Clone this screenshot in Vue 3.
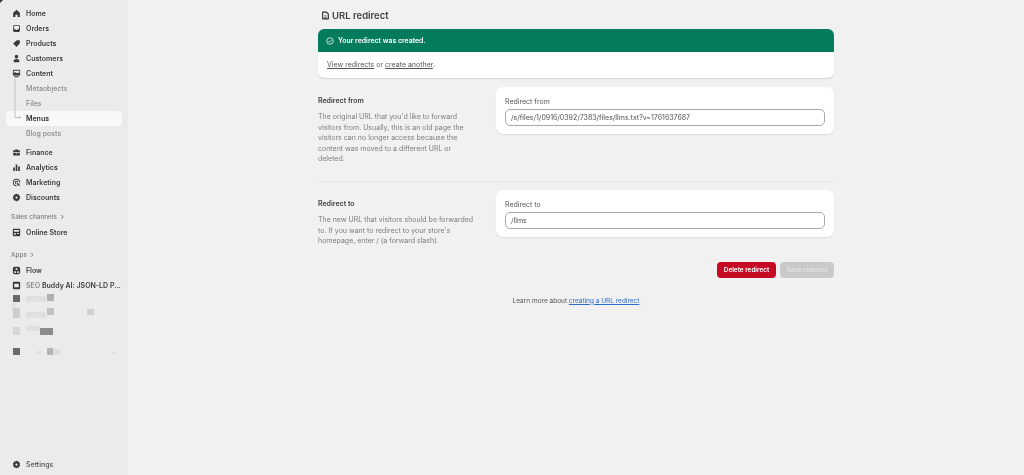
<script setup>
const group1 = [
  { label: 'Home', icon: 'home' }, { label: 'Orders', icon: 'orders' }, { label: 'Products', icon: 'tag' },
  { label: 'Customers', icon: 'person' }, { label: 'Content', icon: 'content' }
]
const subs = [
  { label: 'Metaobjects' }, { label: 'Files' }, { label: 'Menus', active: true }, { label: 'Blog posts' }
]
const group2 = [
  { label: 'Finance', icon: 'finance' }, { label: 'Analytics', icon: 'bars' },
  { label: 'Marketing', icon: 'target' }, { label: 'Discounts', icon: 'gear' }
]
const blocks = [
  [26, 296, 20, 6, '#e0e0e0'], [12, 303, 4, 8, '#e2e2e2'],
  [13, 295, 7, 7, '#6a6a6a'], [47, 294, 7, 7, '#b0b0b0'],
  [26, 312, 20, 6, '#e0e0e0'], [13, 308, 7, 10, '#cfcfcf'], [47, 308, 7, 7, '#c2c2c2'], [87, 309, 7, 6, '#d0d0d0'],
  [26, 326, 14, 5, '#e0e0e0'], [13, 327, 7, 8, '#d6d6d6'], [40, 328, 13, 7, '#8c8c8c'],
  [13, 348, 7, 7, '#6a6a6a'], [47, 348, 6, 7, '#b5b5b5'], [53, 349, 7, 6, '#dedede'], [37, 351, 4, 3, '#dedede'], [112, 352, 3, 2, '#dedede']
]
</script>

<template>
  <div class="page">
    <aside class="sidebar">
      <nav class="nav">
        <div class="group">
          <a v-for="item in group1" :key="item.label" class="row">
            <svg class="ico" viewBox="0 0 16 16">
              <path v-if="item.icon === 'home'" d="M8 1.5 2 6.5V14h4v-4h4v4h4V6.5z" />
              <path v-else-if="item.icon === 'orders'" fill-rule="evenodd" d="M4 2h8a2 2 0 0 1 2 2v8a2 2 0 0 1-2 2H4a2 2 0 0 1-2-2V4a2 2 0 0 1 2-2m-.5 7h2.200l1 1.500h2.600l1-1.500h2.200V4.200a.7.7 0 0 0-.7-.7H4.200a.7.7 0 0 0-.7.7z" />
              <path v-else-if="item.icon === 'tag'" d="M8.500 2H13a1 1 0 0 1 1 1v4.500L8 14 2 8z" />
              <path v-else-if="item.icon === 'person'" d="M8 1.500a3.200 3.200 0 1 1 0 6.400 3.200 3.200 0 0 1 0-6.400M3 14.500v-2.300C3 10.400 5 9 8 9s5 1.400 5 3.200v2.300z" />
              <path v-else-if="item.icon === 'content'" fill-rule="evenodd" d="M3 1.500h10A1.500 1.500 0 0 1 14.500 3v7a1.500 1.500 0 0 1-1.500 1.500H3A1.500 1.500 0 0 1 1.500 10V3A1.500 1.500 0 0 1 3 1.500M3 3v4.500l2.500-2 2.500 2 2-1.500 3 2V3zM4 13h8v1.500H4z" />
            </svg>
            <span>{{ item.label }}</span>
          </a>
          <div class="rail">
            <svg class="rail-line" viewBox="0 0 8 40" width="8" height="40">
              <path d="M1 0V38.500H6.500M5 37 6.500 38.500 5 40" fill="none" stroke="#c4c4c4" stroke-width="1" />
            </svg>
            <a v-for="sub in subs" :key="sub.label" class="row sub" :class="{ active: sub.active }">
              <span>{{ sub.label }}</span>
            </a>
          </div>
        </div>

        <div class="group second">
          <a v-for="item in group2" :key="item.label" class="row">
            <svg class="ico" viewBox="0 0 16 16">
              <path v-if="item.icon === 'finance'" fill-rule="evenodd" d="M5.500 4V2.500h5V4H14v3.500H2V4zM7 4h2v-.2H7zM2 9h5v1h2V9h5v4.500H2z" />
              <path v-else-if="item.icon === 'bars'" d="M2 8h3v6H2zM6.500 2.500h3V14h-3zM11 6h3v8h-3z" />
              <path v-else-if="item.icon === 'target'" fill-rule="evenodd" d="M8 1.500a6.500 6.500 0 0 1 6.500 6.500h-1.600A4.900 4.900 0 1 0 8 12.900v1.600A6.500 6.500 0 0 1 8 1.500m0 3.300A3.200 3.200 0 0 1 11.200 8H9.500A1.500 1.500 0 1 0 8 9.500v1.700a3.200 3.200 0 0 1 0-6.400M9 9l5.500 1.500-2 1.200 1.800 1.800-.9.900-1.800-1.800-1.200 2z" />
              <path v-else-if="item.icon === 'gear'" fill-rule="evenodd" d="M8 1l1.700 1.500 2.300-.2.500 2.200 2 1.200-1 2.300 1 2.300-2 1.200-.5 2.200-2.300-.2L8 15l-1.700-1.500-2.300.2-.5-2.200-2-1.200 1-2.300-1-2.300 2-1.200.5-2.200 2.300.2zm0 5a2 2 0 1 0 0 4 2 2 0 0 0 0-4" />
            </svg>
            <span>{{ item.label }}</span>
          </a>
        </div>

        <div class="heading sales">Sales channels <span class="chev">›</span></div>
        <a class="row">
          <svg class="ico" viewBox="0 0 16 16">
            <path fill-rule="evenodd" d="M3 1.500h10A1.500 1.500 0 0 1 14.500 3v10a1.500 1.500 0 0 1-1.500 1.500H3A1.500 1.500 0 0 1 1.500 13V3A1.500 1.500 0 0 1 3 1.500M3.500 3.500v3.200h9V3.500zM4 9v3.500h2.500V9zm5 0v1.500h3V9z" />
          </svg>
          <span>Online Store</span>
        </a>

        <div class="heading apps">Apps <span class="chev">›</span></div>
        <a class="row">
          <svg class="ico" viewBox="0 0 16 16">
            <path fill-rule="evenodd" d="M5 1.500h6A3.500 3.500 0 0 1 14.500 5v6a3.500 3.500 0 0 1-3.500 3.500H5A3.500 3.500 0 0 1 1.500 11V5A3.500 3.500 0 0 1 5 1.500M6.500 4v3h3V4zM4 9.500v3h3v-3zm5 0v3h3v-3z" />
          </svg>
          <span>Flow</span>
        </a>
        <a class="row">
          <svg class="ico" viewBox="0 0 16 16">
            <path fill-rule="evenodd" d="M3 1.500h10A1.500 1.500 0 0 1 14.500 3v10a1.500 1.500 0 0 1-1.500 1.500H3A1.500 1.500 0 0 1 1.500 13V3A1.500 1.500 0 0 1 3 1.500M4 5v6h8V5z" />
          </svg>
          <span class="clip"><span class="faded">SEO</span> Buddy AI: JSON-LD P...</span>
        </a>
      </nav>

      <a class="row settings">
        <svg class="ico" viewBox="0 0 16 16">
          <path fill-rule="evenodd" d="M8 1l1.700 1.500 2.300-.2.500 2.200 2 1.200-1 2.300 1 2.300-2 1.200-.5 2.200-2.300-.2L8 15l-1.700-1.500-2.300.2-.5-2.200-2-1.200 1-2.300-1-2.300 2-1.200.5-2.200 2.300.2zm0 5a2 2 0 1 0 0 4 2 2 0 0 0 0-4" />
        </svg>
        <span>Settings</span>
      </a>

      <i v-for="(b, i) in blocks" :key="i" class="censor"
        :style="{ left: b[0] + 'px', top: b[1] + 'px', width: b[2] + 'px', height: b[3] + 'px', background: b[4] }"></i>
    </aside>

    <main class="main">
      <div class="column">
        <h1 class="title">
          <svg viewBox="0 0 16 16" width="9" height="9">
            <path fill="none" stroke="#303030" stroke-width="2" d="M3 2h6.500L13 5.500V14H3z" />
            <path d="M6 8h4v1.500H6zM6 10.500h4V12H6z" fill="#303030" />
          </svg>
          URL redirect
        </h1>

        <section class="banner">
          <div class="banner-head">
            <svg viewBox="0 0 16 16" width="8" height="8">
              <circle cx="8" cy="8" r="6.5" fill="none" stroke="#fff" stroke-width="1.5" />
              <path d="M5 8.300 7.200 10.500 11 6" fill="none" stroke="#fff" stroke-width="1.5" />
            </svg>
            Your redirect was created.
          </div>
          <div class="banner-body">
            <a class="plain-link">View redirects</a> or <a class="plain-link">create another</a>.
          </div>
        </section>

        <section class="split first">
          <div class="info">
            <h2>Redirect from</h2>
            <p>The original URL that you'd like to forward visitors from. Usually, this is an old page the visitors can no longer access because the content was moved to a different URL or deleted.</p>
          </div>
          <div class="card">
            <label>Redirect from</label>
            <div class="field">/s/files/1/0916/0392/7383/files/llms.txt?v=1761637687</div>
          </div>
        </section>

        <hr class="divider" />

        <section class="split">
          <div class="info">
            <h2>Redirect to</h2>
            <p>The new URL that visitors should be forwarded to. If you want to redirect to your store's homepage, enter / (a forward slash).</p>
          </div>
          <div class="card">
            <label>Redirect to</label>
            <div class="field">/llms</div>
          </div>
        </section>

        <div class="actions">
          <button class="btn danger">Delete redirect</button>
          <button class="btn disabled">Save redirect</button>
        </div>

        <p class="learn">Learn more about <a>creating a URL redirect</a></p>
      </div>
    </main>
  </div>
</template>

<style>
html, body { margin: 0; background: #f1f1f1; }
</style>

<style scoped>
.page {
  display: flex;
  width: 1024px;
  height: 475px;
  overflow: hidden;
  font-family: Inter, "Noto Sans", sans-serif;
  color: #303030;
  filter: blur(0.35px);
}
.sidebar {
  position: relative;
  flex: 0 0 128px;
  width: 128px;
  min-width: 0;
  background: #ebebeb;
  box-sizing: border-box;
  padding: 6px 6px 0;
  display: flex;
  flex-direction: column;
}
.sidebar::before {
  content: "";
  position: absolute;
  left: 0;
  top: 0;
  border-top: 3px solid #333;
  border-right: 3px solid transparent;
}
.nav { flex: 1; min-width: 0; display: flex; flex-direction: column; }
.group { display: flex; flex-direction: column; }
.second { margin-top: 4px; }
.row {
  display: flex;
  align-items: center;
  gap: 5px;
  height: 15px;
  padding-left: 6px;
  font-size: 7px;
  font-weight: 600;
  white-space: nowrap;
  color: #3d3d3d;
  border-radius: 4px;
}
.ico { width: 9px; height: 9px; flex: none; fill: #3a3a3a; }
.rail { position: relative; display: flex; flex-direction: column; }
.rail-line { position: absolute; left: 8px; top: -2px; z-index: 1; }
.sub { padding-left: 20px; font-weight: 500; color: #8a8a8a; }
.sub.active { background: #f7f8f7; color: #303030; font-weight: 600; }
.heading { font-size: 6.4px; font-weight: 500; color: #7d7d7d; padding-left: 5px; height: 12px; line-height: 12px; }
.chev { margin-left: 2px; font-size: 8px; }
.sales { margin-top: 5px; margin-bottom: 3px; }
.apps { margin-top: 8px; margin-bottom: 3px; }
.clip { overflow: hidden; }
.faded { color: #8c8c8c; }
.settings { position: absolute; left: 6px; top: 457px; font-weight: 500; color: #555; }
.censor { position: absolute; display: block; filter: blur(0.5px); }

.main { flex: 1; background: #f1f1f1; display: flex; padding-left: 190px; }
.column { width: 516px; display: flex; flex-direction: column; }
.title {
  margin: 0;
  height: 29px;
  padding: 1px 0 0 3px;
  box-sizing: border-box;
  display: flex;
  align-items: center;
  gap: 2px;
  font-size: 9.5px;
  font-weight: 600;
  color: #404040;
}
.banner {
  border-radius: 6px;
  overflow: hidden;
  background: #fff;
  box-shadow: 0 1px 1px rgba(0, 0, 0, .12);
  height: 49px;
  flex: none;
}
.banner-head {
  height: 23px;
  background: #047b5d;
  color: #fff;
  display: flex;
  align-items: center;
  gap: 4px;
  padding-left: 8px;
  font-size: 6.9px;
  font-weight: 600;
}
.banner-body {
  height: 26px;
  line-height: 26px;
  padding-left: 9px;
  font-size: 7px;
  color: #616161;
}
.plain-link { color: #555; text-decoration: underline; }
.split { display: flex; justify-content: space-between; }
.first { margin-top: 9px; }
.info { width: 156px; padding-top: 9px; }
.info h2 { margin: 0 0 6px; font-size: 7px; line-height: 10px; font-weight: 600; color: #404040; }
.info p { margin: 0; font-size: 7px; line-height: 10.6px; color: #7d7d7d; }
.card {
  width: 338px;
  height: 47px;
  box-sizing: border-box;
  background: #fff;
  border-radius: 7px;
  box-shadow: 0 1px 1px rgba(0, 0, 0, .08);
  padding: 9px 9px 0;
}
.card label { display: block; font-size: 7px; line-height: 10px; color: #555; margin-bottom: 3px; position: relative; top: 1px; }
.field {
  height: 17px;
  box-sizing: border-box;
  border: 1px solid #a8a8a8;
  border-radius: 5px;
  padding-left: 5px;
  font-size: 7px;
  line-height: 15px;
  color: #505050;
}
.divider { width: 100%; box-sizing: border-box; margin: 16px 0 8px; border: 0; border-top: 1px solid #e6e6e6; }
.actions { display: flex; justify-content: flex-end; gap: 4px; margin-top: 15px; }
.btn {
  height: 16px;
  border: 0;
  padding: 0;
  border-radius: 4px;
  font-family: inherit;
  font-size: 6.4px;
  font-weight: 600;
}
.danger { width: 59px; background: #c70a24; color: #fff; }
.disabled { width: 54px; background: #c9c9c9; color: #e3e3e3; }
.learn { margin: 18px 0 0; text-align: center; font-size: 6.5px; line-height: 10px; color: #555; }
.learn a { color: #2c6ecb; text-decoration: underline; }
</style>
